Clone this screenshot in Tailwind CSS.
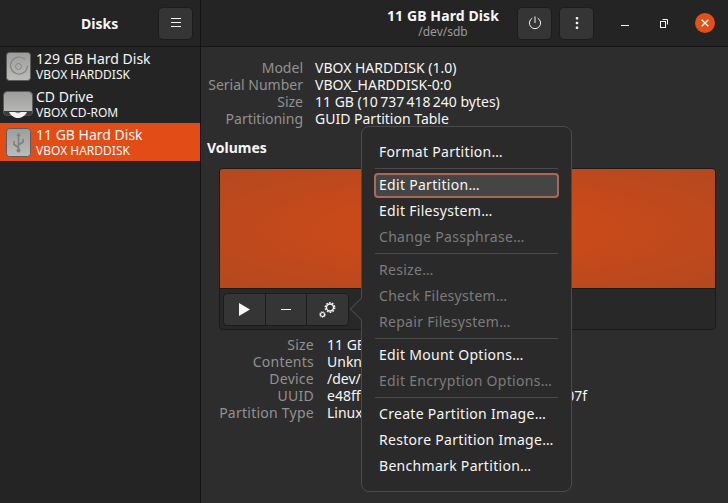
<!DOCTYPE html>
<html lang="en">
<head>
    <meta charset="UTF-8">
    <title>Disks</title>
    <script src="https://cdn.jsdelivr.net/npm/@tailwindcss/browser@4"></script>
</head>
<body class="bg-[#2d2d2d] font-['Noto_Sans',sans-serif] text-[14px] text-[#f6f6f5] overflow-hidden">
    <div class="relative w-[728px] h-[503px] flex flex-col overflow-hidden">
        <!-- header bar -->
        <header class="h-[47px] shrink-0 flex bg-[#242424] border-b border-[#141414]">
            <div class="w-[201px] shrink-0 flex items-center border-r border-[#141414] pl-[81px] pr-[7px]">
                <span class="font-bold text-[14px]">Disks</span>
                <button class="ml-auto w-[35px] h-[33px] rounded-[5px] bg-[#353535] border border-[#1c1c1c] flex items-center justify-center">
                    <svg width="12" height="12" viewBox="0 0 12 12" fill="none" stroke="#f6f6f5" stroke-width="1"><path d="M1 1.500h10M1 5.500h10M1 9.500h10"/></svg>
                </button>
            </div>
            <div class="flex-1 flex items-center relative">
                <div class="w-[484px] flex flex-col items-center">
                    <span class="font-bold text-[14px] leading-[16px] tracking-[0.1px]">11 GB Hard Disk</span>
                    <span class="text-[12px] text-[#9a9a98] leading-[15px]">/dev/sdb</span>
                </div>
                <div class="flex gap-[7px] absolute left-[316px]">
                    <button class="w-[35px] h-[33px] rounded-[5px] bg-[#353535] border border-[#1c1c1c] flex items-center justify-center">
                        <svg width="14" height="14" viewBox="0 0 14 14" fill="none" stroke="#f6f6f5" stroke-width="1"><path d="M7 .5v6.500"/><path d="M4.200 2.200a5.600 5.600 0 1 0 5.600 0"/></svg>
                    </button>
                    <button class="w-[35px] h-[33px] rounded-[5px] bg-[#353535] border border-[#1c1c1c] flex items-center justify-center">
                        <svg width="4" height="12" viewBox="0 0 4 12" fill="#f6f6f5"><rect x="0.7" y="0" width="2.600" height="2.600" rx="1"/><rect x="0.7" y="4.700" width="2.600" height="2.600" rx="1"/><rect x="0.7" y="9.400" width="2.600" height="2.600" rx="1"/></svg>
                    </button>
                </div>
                <div class="absolute left-[414px] top-[13px] w-[20px] h-[20px] flex items-center justify-center">
                    <div class="w-[8px] h-px bg-[#f6f6f5] mt-[4px]"></div>
                </div>
                <div class="absolute left-[453px] top-[13px] w-[20px] h-[20px] flex items-center justify-center">
                    <svg width="8" height="9" viewBox="0 0 8 9" fill="none" stroke="#f6f6f5" stroke-width="1"><rect x="0.5" y="2.500" width="5" height="6"/><path d="M2.500 .5h5v5"/></svg>
                </div>
                <div class="absolute left-[494px] top-[13px] w-[20px] h-[20px] rounded-full bg-[#e2501a] flex items-center justify-center">
                    <svg width="8" height="8" viewBox="0 0 8 8" fill="none" stroke="#ffffff" stroke-width="1.300"><path d="M.7 .7l6.600 6.600M7.300 .7L.7 7.300"/></svg>
                </div>
            </div>
        </header>

        <div class="flex-1 flex min-h-0">
            <!-- drive list -->
            <aside class="w-[201px] shrink-0 bg-[#242424] border-r border-[#141414]">
                <svg width="0" height="0" class="absolute">
                    <defs>
                        <linearGradient id="disk" x1="0" y1="0" x2="0" y2="1"><stop offset="0" stop-color="#9d9d9b"/><stop offset="1" stop-color="#bcbcba"/></linearGradient>
                    </defs>
                </svg>
                <div class="h-[38px] flex items-center">
                    <div class="w-[36px] flex justify-center">
                        <svg width="25" height="29" viewBox="0 0 25 29"><rect x="0.5" y="0.5" width="24" height="28" rx="3" fill="url(#disk)" stroke="#5c5c5c"/><path d="M19 7.500a8.500 8.500 0 1 0 2.500 6" fill="none" stroke="#858583" stroke-width="1.200"/><circle cx="12.500" cy="14.500" r="3" fill="none" stroke="#858583"/></svg>
                    </div>
                    <div class="leading-[16px] pt-[2px]"><div class="text-[14px]">129 GB Hard Disk</div><div class="text-[12px]">VBOX HARDDISK</div></div>
                </div>
                <div class="h-[38px] flex items-center">
                    <div class="w-[36px] flex justify-center">
                        <svg width="30" height="27" viewBox="0 0 30 27"><rect x="0.5" y="0.5" width="29" height="24" rx="4" fill="url(#disk)" stroke="#5c5c5c"/><path d="M1 20h28v1.500a3 3 0 0 1-3 3H4a3 3 0 0 1-3-3z" fill="#3c3c3c"/><path d="M6 21h18c-2 4-6 6-9 6s-7-2-9-6z" fill="#f2f2f2"/><path d="M12 21h6c-1 1-2 1.300-3 1.300s-2-.3-3-1.300z" fill="#8a8a88"/></svg>
                    </div>
                    <div class="leading-[16px] pt-[2px]"><div class="text-[14px]">CD Drive</div><div class="text-[12px]">VBOX CD-ROM</div></div>
                </div>
                <div class="h-[38px] flex items-center bg-[#e24c16]">
                    <div class="w-[36px] flex justify-center">
                        <svg width="25" height="29" viewBox="0 0 25 29"><rect x="0.5" y="0.5" width="24" height="28" rx="3" fill="url(#disk)" stroke="#5c5c5c"/><path d="M12.500 7v15M12.500 19.500l-4.500-3v-3.500M12.500 17l4.500-3v-3" fill="none" stroke="#7f7f7d" stroke-width="1.600"/><path d="M12.500 4.500l-2.200 3.500h4.400z" fill="#7f7f7d"/><circle cx="12.500" cy="22.500" r="2" fill="#7f7f7d"/></svg>
                    </div>
                    <div class="leading-[16px] pt-[2px]"><div class="text-[14px]">11 GB Hard Disk</div><div class="text-[12px]">VBOX HARDDISK</div></div>
                </div>
            </aside>

            <!-- drive details -->
            <main class="flex-1 pt-[12px] pl-[6px] pr-[12px]">
                <dl class="grid grid-cols-[96px_auto] gap-x-[12px] justify-start leading-[17px]">
                    <dt class="text-right text-[#929290]">Model</dt><dd>VBOX HARDDISK (1.0)</dd>
                    <dt class="text-right text-[#929290]">Serial Number</dt><dd>VBOX_HARDDISK-0:0</dd>
                    <dt class="text-right text-[#929290]">Size</dt><dd>11 GB (10&#8201;737&#8201;418&#8201;240 bytes)</dd>
                    <dt class="text-right text-[#929290]">Partitioning</dt><dd>GUID Partition Table</dd>
                </dl>
                <h2 class="font-bold mt-[12px] leading-[17px]">Volumes</h2>
                <div class="mt-[12px] ml-[12px] w-[497px] h-[162px] rounded-[4px] border border-[#1b1b1b] bg-[#282828] overflow-hidden">
                    <div class="h-[120px] border-b border-[#1b1b1b] bg-[radial-gradient(ellipse_at_center,#d24b17,#b5481f)]"></div>
                    <div class="py-[4px] pl-[3px]">
                        <div class="w-[126px] h-[33px] flex rounded-[4px] border border-[#1c1c1c] bg-[#353535]">
                            <div class="flex-1 flex items-center justify-center border-r border-[#1c1c1c]">
                                <svg width="11" height="13" viewBox="0 0 11 13" fill="#f6f6f5"><path d="M0 0l11 6.500-11 6.500z"/></svg>
                            </div>
                            <div class="flex-1 flex items-center justify-center border-r border-[#1c1c1c]">
                                <div class="w-[10px] h-[1.5px] bg-[#f6f6f5]"></div>
                            </div>
                            <div class="flex-1 flex items-center justify-center">
                                <svg width="17" height="16" viewBox="0 0 17 16" fill="none" stroke="#f6f6f5"><circle cx="11" cy="5.500" r="3.500" stroke-width="1.400"/><circle cx="11" cy="5.500" r="4.800" stroke-width="1.300" stroke-dasharray="1.700 1.300"/><circle cx="3.500" cy="12.500" r="2" stroke-width="1.200"/><circle cx="3.500" cy="12.500" r="3" stroke-width="0.800" stroke-dasharray="1 1"/></svg>
                            </div>
                        </div>
                    </div>
                </div>
                <dl class="mt-[6px] ml-[12px] grid grid-cols-[95px_auto] gap-x-[13px] justify-start leading-[17px]">
                    <dt class="text-right text-[#929290] tracking-[0.25px]">Size</dt><dd>11 GB (10&#8201;737&#8201;418&#8201;240 bytes)</dd>
                    <dt class="text-right text-[#929290] tracking-[0.25px]">Contents</dt><dd>Unknown</dd>
                    <dt class="text-right text-[#929290] tracking-[0.25px]">Device</dt><dd>/dev/sdb1</dd>
                    <dt class="text-right text-[#929290] tracking-[0.25px]">UUID</dt><dd>e48ff5a2-3c41-4d6e-9f0b-7a1c2e8d407f</dd>
                    <dt class="text-right text-[#929290] tracking-[0.25px]">Partition Type</dt><dd>Linux Filesystem</dd>
                </dl>
            </main>
        </div>

        <!-- popover menu -->
        <div class="absolute left-[361px] top-[126px] w-[211px] h-[366px] rounded-[8px] border border-[#4a4a4a] bg-[#2a2a2a] px-[12px] py-[13px] tracking-[0.3px]">
            <div class="px-[5px] h-[24px] leading-[24px]">Format Partition…</div>
            <div class="h-px bg-[#4a4a4a] mt-[4px] mb-[4px] mx-[1px]"></div>
            <div class="px-[3px] h-[25px] leading-[20px] rounded-[4px] border-2 border-[#a96a55] bg-[#454545]">Edit Partition…</div>
            <div class="px-[5px] h-[26px] leading-[26px]">Edit Filesystem…</div>
            <div class="px-[5px] h-[26px] leading-[26px] text-[#7c7c7a]">Change Passphrase…</div>
            <div class="h-px bg-[#4a4a4a] mt-[3px] mb-[3px] mx-[1px]"></div>
            <div class="px-[5px] h-[26px] leading-[26px] text-[#7c7c7a]">Resize…</div>
            <div class="px-[5px] h-[26px] leading-[26px] text-[#7c7c7a]">Check Filesystem…</div>
            <div class="px-[5px] h-[26px] leading-[26px] text-[#7c7c7a]">Repair Filesystem…</div>
            <div class="h-px bg-[#4a4a4a] mt-[3px] mb-[3px] mx-[1px]"></div>
            <div class="px-[5px] h-[26px] leading-[26px]">Edit Mount Options…</div>
            <div class="px-[5px] h-[26px] leading-[26px] text-[#7c7c7a]">Edit Encryption Options…</div>
            <div class="h-px bg-[#4a4a4a] mt-[3px] mb-[3px] mx-[1px]"></div>
            <div class="px-[5px] h-[26px] leading-[26px]">Create Partition Image…</div>
            <div class="px-[5px] h-[26px] leading-[26px]">Restore Partition Image…</div>
            <div class="px-[5px] h-[26px] leading-[26px]">Benchmark Partition…</div>
            <!-- popover arrow -->
            <div class="absolute left-[-9px] top-[174px] w-[16px] h-[16px] rotate-45 bg-[#2a2a2a] border-l border-b border-[#4a4a4a]"></div>
        </div>
    </div>
</body>
</html>
